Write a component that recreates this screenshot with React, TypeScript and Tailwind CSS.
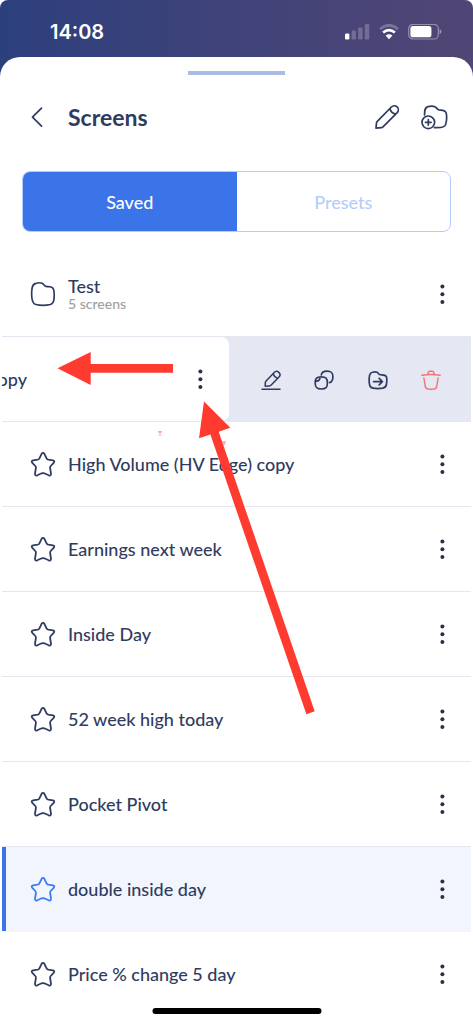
import React from "react";

type IconProps = { className?: string };

const stroke = {
  fill: "none",
  stroke: "currentColor",
  strokeLinecap: "round" as const,
  strokeLinejoin: "round" as const,
};

const StarIcon = ({ className = "" }: IconProps) => (
  <svg viewBox="0 0 26 26" className={`size-[26px] shrink-0 ${className}`} {...stroke} strokeWidth="1.8">
    <path d="M11.6 2.8Q13 .8 14.4 2.8L16.6 7.3Q17.2 8.5 18.4 8.7L22.9 9.3Q25.2 9.8 23.7 11.8L20.7 15Q19.9 15.9 20.1 17L21 22.6Q21.1 25.2 18.7 24.3L14.3 22.3Q13 21.8 11.7 22.3L7.3 24.3Q4.9 25.2 5 22.6L5.9 17Q6.1 15.9 5.3 15L2.3 11.8Q.8 9.8 3.1 9.3L7.6 8.7Q8.8 8.5 9.4 7.3Z" />
  </svg>
);

const FolderIcon = () => (
  <svg viewBox="0 0 26 26" className="size-[26px] shrink-0" {...stroke} strokeWidth="1.7">
    <path d="M6 2.3Q9.5 1.3 12.2 2.2C14 3 13.8 4.8 16 5.4C18.2 6 20.8 5.3 22.6 6.8C24.6 8.6 24.3 13.2 24.1 17C23.9 20.8 23 22.8 20.3 23.5C16 24.5 10 24.5 5.9 23.5C3.2 22.8 2.3 20.5 1.9 17C1.5 13.2 1.6 9.5 2.2 6.5C2.7 4 3.7 2.8 6 2.3Z" />
  </svg>
);

const PencilIcon = () => (
  <svg viewBox="0 0 26 26" className="size-[26px]" {...stroke} strokeWidth="1.7">
    <path d="M2 24.2L2.5 18.9Q2.6 18 3.3 17.3L17.4 3A3.9 3.9 0 0 1 23.2 8.6L9 22.8Q8.3 23.5 7.4 23.6ZM16 4.4Q16.6 9 21.7 10.1" />
  </svg>
);

const FolderPlusIcon = () => (
  <svg viewBox="0 0 28 26" className="h-[26px] w-[28px]" {...stroke} strokeWidth="1.7">
    <path d="M4.5 11C4.6 5.4 5.2 3.2 8 2.6C11 1.9 13.6 2.1 15.3 2.9C17.1 3.9 17 5.5 19.2 6C22 6.4 25 5.9 26.1 8.8C26.8 11.5 26.6 17 25.7 20.4C24.8 23.7 20.8 24 14.4 23.6" />
    <circle cx="8.3" cy="18.3" r="6.3" />
    <path d="M8.3 15.5V21.1M5.5 18.3H11.1" />
  </svg>
);

const RenameIcon = () => (
  <svg viewBox="0 0 20 20" className="size-5" {...stroke} strokeWidth="1.5">
    <path d="M1 19.2H19M4.2 16.2L4.3 12.7Q4.4 11.7 5.1 10.9L13.2 2.5A3.2 3.2 0 0 1 18 7L10.2 15Q9.4 15.8 8.3 15.9ZM12.2 3.6Q13 7 16.5 8.3" />
  </svg>
);

const CopyIcon = () => (
  <svg viewBox="0 0 20 20" className="size-5" {...stroke} strokeWidth="1.7">
    <path d="M7.2 6.8C2.7 6.8 1.2 8.4 1.2 13C1.2 17.5 2.7 19 7.2 19C12 19 13.4 17.5 13.4 13C13.4 8.4 12 6.8 7.2 6.8ZM2.2 11.1Q5.8 11.3 6.1 7.1M7.3 4.8C7.8 1.9 9.5 1.2 13.1 1.2C17.5 1.2 18.9 2.7 18.9 7C18.9 10.4 18.1 12 15.6 12.6" />
  </svg>
);

const MoveIcon = () => (
  <svg viewBox="0 0 20 20" className="size-5" {...stroke} strokeWidth="1.7">
    <path d="M4.5 2.3Q7.2 1.6 9 2.3C10.5 3 10.4 4.4 12.2 4.7C14.5 5 17.2 4.5 18.3 6.5C19.2 8.5 18.8 12 18.4 14.5C18 17 16.8 17.8 14.7 18.2Q9.8 19 5 18.2C2.7 17.8 1.7 16.5 1.4 14C1 11 1.1 7.8 1.6 5.2Q2.1 2.9 4.5 2.3ZM5.6 11.6H14.4M11.2 8.4L14.4 11.6L11.2 14.8" />
  </svg>
);

const TrashIcon = () => (
  <svg viewBox="0 0 20 20" className="size-5" {...stroke} strokeWidth="1.4">
    <path d="M.8 5.2Q10 3.7 19.2 5.2M7 4.2Q6.9 1.2 9 1.2H11Q13.1 1.2 13 4.2M2.9 8L4.2 16.2Q4.6 18.8 7.2 19.1Q10 19.4 12.8 19.1Q15.4 18.8 15.8 16.2L17.1 8" />
  </svg>
);

const MenuButton = ({ name }: { name: string }) => (
  <button type="button" aria-label={`More options for ${name}`} className="flex h-10 w-6 shrink-0 items-center justify-center text-[#2a3048]">
    <svg viewBox="0 0 6 22" className="h-[22px] w-1.5" fill="currentColor">
      <circle cx="3.4" cy="3.5" r="2" />
      <circle cx="3.4" cy="11.3" r="2" />
      <circle cx="3.4" cy="19.1" r="2" />
    </svg>
  </button>
);

const StatusBar = () => (
  <header className="flex h-20 items-start justify-between rounded-t-lg bg-linear-to-r from-[#2c3f7d] via-[#404379] to-[#514675] pt-[17px] pr-[31px] pl-[50px] text-white">
    <time className="font-[Inter,sans-serif] text-xl leading-[30px] font-semibold">14:08</time>
    <div className="flex h-[30px] items-center gap-[9px]">
      <svg viewBox="0 0 25 16" className="h-4 w-[25px]" fill="currentColor">
        <rect x="0" y="9.5" width="4.4" height="6" rx="1.2" />
        <g opacity=".22">
          <rect x="6.6" y="6.5" width="4.4" height="9" rx="1.2" />
          <rect x="13.2" y="3.5" width="4.4" height="12" rx="1.2" />
          <rect x="19.8" y="0" width="4.4" height="15.5" rx="1.2" />
        </g>
      </svg>
      <svg viewBox="0 0 20 16" className="h-4 w-5" fill="none" stroke="currentColor" strokeWidth="2.8">
        <path opacity=".25" d="M1 5Q10 -2.4 19 5" />
        <path d="M4.1 8.5Q10 3.8 15.9 8.5" />
        <path fill="currentColor" stroke="none" d="M6.6 11.6Q10 9 13.4 11.6L10 15.3Z" />
      </svg>
      <svg viewBox="0 0 34 16" className="h-4 w-[34px]" fill="currentColor">
        <rect x=".7" y=".4" width="29.6" height="14.6" rx="4.2" fill="none" stroke="currentColor" strokeWidth="1.2" opacity=".4" />
        <rect x="2.4" y="2.1" width="21" height="11.2" rx="2.6" />
        <path opacity=".45" d="M31.6 5.3Q33.4 6 33.4 7.7T31.6 10.1Z" />
      </svg>
    </div>
  </header>
);

const screens = [
  { name: "High Volume (HV Edge) copy" },
  { name: "Earnings next week" },
  { name: "Inside Day" },
  { name: "52 week high today" },
  { name: "Pocket Pivot" },
  { name: "double inside day", active: true },
  { name: "Price % change 5 day" },
];

const SwipedRow = () => (
  <li className="flex h-[85px] bg-[#e5e8f2]">
    <div className="flex w-[227px] shrink-0 items-center justify-between rounded-r-lg border-b border-[#e3e7f0] bg-white pr-[17px]">
      <span className="flex w-[25px] justify-end overflow-hidden">opy</span>
      <MenuButton name="copy" />
    </div>
    <div className="flex flex-1 items-center justify-between pr-[30px] pl-8">
      <button type="button" aria-label="Rename"><RenameIcon /></button>
      <button type="button" aria-label="Duplicate"><CopyIcon /></button>
      <button type="button" aria-label="Move to folder"><MoveIcon /></button>
      <button type="button" aria-label="Delete" className="text-[#f17578]"><TrashIcon /></button>
    </div>
  </li>
);

const Annotations = () => (
  <svg viewBox="0 0 473 1024" className="pointer-events-none absolute top-0 left-0 h-[1024px] w-[473px]" fill="#ff3b30" aria-hidden="true">
    <path d="M57.5 368.3L90.7 352V364H173V372.8H90.7V385Z" />
    <path d="M204 401.5L230.3 427.8L218.7 431.8L314.7 711.2L306.4 714.2L210.4 434.6L199 438.3Z" />
    <path opacity=".45" d="M158 431H162V432.5H160.6V436H159.4V432.5H158Z" />
    <path opacity=".4" d="M222 441H226L225 445H223Z" />
  </svg>
);

export default function App() {
  return (
    <div className="relative min-h-screen overflow-hidden bg-white font-[Lato,sans-serif] text-[18px] leading-6 font-medium text-[#303b60]">
      <StatusBar />
      <main className="-mt-[23px] rounded-t-[20px] bg-white pt-3.5">
        <div className="mx-auto h-1 w-[97px] bg-[#a9bde4]" />
        <div className="flex items-center pt-6 pr-[25px] pl-6">
          <button type="button" aria-label="Back" className="flex size-[26px] items-center justify-center">
            <svg viewBox="0 0 12 20" className="h-5 w-3" {...stroke} strokeWidth="1.7">
              <path d="M10.5 1.2L1.5 10.2L10.5 19.2" />
            </svg>
          </button>
          <h1 className="ml-[18px] flex-1 text-[23px] leading-9 font-bold">Screens</h1>
          <div className="flex gap-5">
            <button type="button" aria-label="Edit"><PencilIcon /></button>
            <button type="button" aria-label="New folder"><FolderPlusIcon /></button>
          </div>
        </div>
        <div role="tablist" className="mx-[22px] mt-9 flex h-[61px] overflow-hidden rounded-lg border border-[#b4cdfb]">
          <button type="button" role="tab" aria-selected="true" className="flex-1 bg-[#3a74e8] text-white">Saved</button>
          <button type="button" role="tab" aria-selected="false" className="flex-1 text-[#b4cdfb]">Presets</button>
        </div>
        <ul className="mx-0.5 mt-5">
          <li className="flex h-[85px] items-center border-b border-[#e3e7f0] pr-[17px] pl-7">
            <FolderIcon />
            <div className="ml-3 flex-1">
              <p className="leading-5">Test</p>
              <p className="text-sm leading-4 text-[#a0a0a0]">5 screens</p>
            </div>
            <MenuButton name="Test" />
          </li>
          <SwipedRow />
          {screens.map(({ name, active }, i) => (
            <li
              key={name}
              className={`flex h-[85px] items-center border-b pr-[17px] pl-7 ${
                active
                  ? "border-[#f2f5fd] bg-[#f2f5fd] shadow-[inset_4px_0_0_#3a74e8]"
                  : i === screens.length - 1
                    ? "border-transparent"
                    : "border-[#e3e7f0]"
              }`}
            >
              <StarIcon className={active ? "text-[#3a7bf5]" : ""} />
              <span className="ml-3 flex-1">{name}</span>
              <MenuButton name={name} />
            </li>
          ))}
        </ul>
      </main>
      <div className="absolute top-[1008px] left-1/2 h-1.5 w-[169px] -translate-x-1/2 rounded-full bg-black" />
      <Annotations />
    </div>
  );
}
